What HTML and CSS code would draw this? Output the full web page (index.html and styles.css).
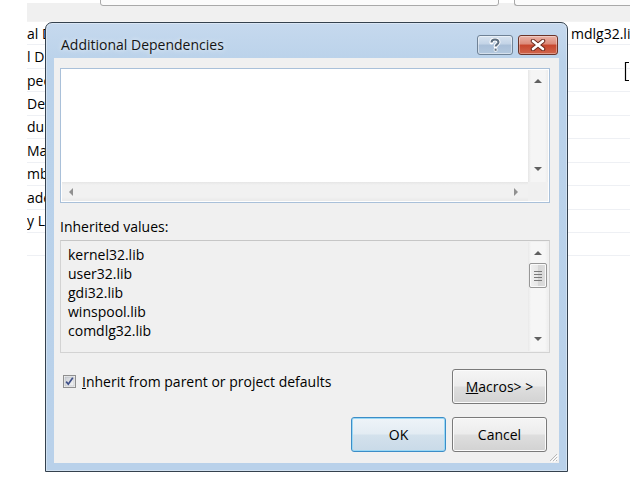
FILE: index.html
```html
<!DOCTYPE html>
<html>
<head>
<meta charset="utf-8">
<link rel="stylesheet" href="styles.css">
</head>
<body>
<div class="app">
  <div class="toolbar">
    <div class="tb-box tb-box-1"></div>
    <div class="tb-box tb-box-2"></div>
  </div>
  <div class="grid">
    <div class="row"><span class="cell-l">al D</span><span class="cell-r">mdlg32.lib;%(AdditionalDependencies)</span></div>
    <div class="row"><span class="cell-l">l D</span><span class="cell-r"></span></div>
    <div class="row"><span class="cell-l">pec</span><span class="cell-r"></span></div>
    <div class="row"><span class="cell-l">Def</span><span class="cell-r"></span></div>
    <div class="row"><span class="cell-l">dule</span><span class="cell-r"></span></div>
    <div class="row"><span class="cell-l">Mar</span><span class="cell-r"></span></div>
    <div class="row"><span class="cell-l">mb</span><span class="cell-r"></span></div>
    <div class="row"><span class="cell-l">ade</span><span class="cell-r"></span></div>
    <div class="row"><span class="cell-l">y Li</span><span class="cell-r"></span></div>
    <div class="row"><span class="cell-l"></span><span class="cell-r"></span></div>
  </div>
</div>

<svg class="ibeam" width="9" height="21" viewBox="0 0 9 21">
  <path d="M7 1.5H3.5V19.5H7" fill="none" stroke="#fff" stroke-width="3"/>
  <path d="M7 1.5H3.5V19.5H7" fill="none" stroke="#000" stroke-width="1.2"/>
</svg>

<div class="dialog">
  <div class="titlebar">
    <div class="title">Additional Dependencies</div>
    <div class="tbtns">
      <div class="tbtn help">
        <svg width="14" height="14" viewBox="0 0 14 14">
          <path d="M3.5 4.5C3.5 2.5 5 1.5 7 1.5S10.5 2.6 10.5 4.3C10.5 6.2 7.6 6.6 7.6 8.6" fill="none" stroke="#fff" stroke-width="4" stroke-linecap="round"/>
          <circle cx="7.6" cy="11.8" r="2" fill="#fff"/>
          <path d="M3.5 4.5C3.5 2.5 5 1.5 7 1.5S10.5 2.6 10.5 4.3C10.5 6.2 7.6 6.6 7.6 8.6" fill="none" stroke="#5e6f80" stroke-width="2"/>
          <rect x="6.6" y="10.6" width="2" height="2.2" fill="#5e6f80"/>
        </svg>
      </div>
      <div class="tbtn close">
        <svg width="16" height="12" viewBox="0 0 16 12">
          <path d="M3 2L13 10M13 2L3 10" stroke="#6b2a1e" stroke-width="4.5" stroke-linecap="round"/>
          <path d="M3 2L13 10M13 2L3 10" stroke="#fff" stroke-width="2.6" stroke-linecap="round"/>
        </svg>
      </div>
    </div>
  </div>
  <div class="client">
    <div class="editbox">
      <div class="edit-area"></div>
      <div class="vscroll">
        <span class="arr up"></span>
        <span class="arr down"></span>
      </div>
      <div class="hscroll">
        <span class="arr left"></span>
        <span class="arr right"></span>
      </div>
      <div class="corner"></div>
    </div>

    <div class="label">Inherited values:</div>

    <div class="listbox">
      <div class="items">
        <div>kernel32.lib</div>
        <div>user32.lib</div>
        <div>gdi32.lib</div>
        <div>winspool.lib</div>
        <div>comdlg32.lib</div>
      </div>
      <div class="vscroll list-scroll">
        <span class="arr up"></span>
        <span class="thumb"><i></i><i></i><i></i><i></i></span>
        <span class="spacer"></span>
        <span class="arr down"></span>
      </div>
    </div>

    <div class="opts">
      <label class="check">
        <svg class="cbox" width="13" height="13" viewBox="0 0 13 13">
          <defs>
            <linearGradient id="cbg" x1="0" y1="0" x2="1" y2="1">
              <stop offset="0" stop-color="#cbcfd5"/>
              <stop offset="1" stop-color="#f6f6f6"/>
            </linearGradient>
          </defs>
          <rect x="0.5" y="0.5" width="12" height="12" fill="#f4f4f4" stroke="#8f8f8f"/>
          <rect x="2" y="2" width="9" height="9" fill="url(#cbg)" stroke="#b4b9c0" stroke-width="0.6"/>
          <path d="M3.2 6.6L5.3 9.2L9.8 2.8" fill="none" stroke="#3e4f88" stroke-width="1.7"/>
        </svg>
        <span><u>I</u>nherit from parent or project defaults</span>
      </label>
      <button class="btn macros"><u>M</u>acros&gt; &gt;</button>
    </div>

    <div class="actions">
      <button class="btn ok">OK</button>
      <button class="btn">Cancel</button>
    </div>

    <svg class="grip" width="10" height="10" viewBox="0 0 10 10">
      <path d="M9 2L2 9M9 5L5 9M9 8L8 9" stroke="#b8b8b8" stroke-width="1"/>
      <path d="M10 3L3 10M10 6L6 10" stroke="#fff" stroke-width="1"/>
    </svg>
  </div>
</div>
</body>
</html>
```

FILE: styles.css
```css
html, body {
  margin: 0;
  padding: 0;
}
body {
  width: 643px;
  height: 483px;
  overflow: hidden;
  position: relative;
  background: #ffffff;
  font-family: "Open Sans", "Noto Sans", "Liberation Sans", sans-serif;
  font-size: 14px;
  color: #000;
}

/* background application */
.app {
  margin-left: 27px;
  width: 603px;
  height: 483px;
  background: #fff;
  display: flex;
  flex-direction: column;
}
.toolbar {
  margin-top: 3px;
  height: 18px;
  background: #f0f0f0;
  display: flex;
  align-items: flex-start;
  padding-left: 73px;
  gap: 15px;
  border-bottom: 1px solid #f3f3f3;
}
.tb-box {
  margin-top: -14px;
  height: 17px;
  box-sizing: border-box;
  border: 1px solid #a9a9a9;
  border-radius: 3px;
  background: #fbfbfb;
}
.tb-box-1 { width: 399px; }
.tb-box-2 { flex: 1; border-right: none; border-radius: 3px 0 0 3px; }

.grid {
  display: flex;
  flex-direction: column;
}
.row {
  height: 23.45px;
  box-sizing: border-box;
  border-bottom: 1px solid #eef0f4;
  display: grid;
  grid-template-columns: 20px 1fr 59px;
  align-items: center;
  white-space: nowrap;
}
.cell-l {
  overflow: hidden;
}
.cell-r {
  grid-column: 3;
  overflow: hidden;
}

.ibeam {
  position: absolute;
  left: 622px;
  top: 61px;
}

/* dialog */
.dialog {
  position: absolute;
  left: 45px;
  top: 22px;
  width: 523px;
  height: 450px;
  box-sizing: border-box;
  border: 1px solid #34414e;
  border-radius: 7px 7px 0 0;
  background: linear-gradient(#c6d9ee, #bad2ea 40px, #b9d1ea);
  box-shadow: inset 0 0 0 1px rgba(255, 255, 255, 0.35);
  display: flex;
  flex-direction: column;
}
.titlebar {
  height: 35px;
  display: flex;
  align-items: flex-start;
  padding: 0 9px 0 15px;
}
.title {
  flex: 1;
  margin-top: 13px;
  line-height: 18px;
  color: #141414;
  text-shadow: 0 0 5px rgba(255, 255, 255, 0.9);
}
.tbtns {
  display: flex;
  gap: 5px;
  margin-top: 12px;
}
.tbtn {
  height: 20px;
  box-sizing: border-box;
  border-radius: 3px;
  display: flex;
  align-items: center;
  justify-content: center;
}
.help {
  width: 36px;
  border: 1px solid #6f8296;
  background: linear-gradient(#d8e4f1 0%, #c2d3e6 45%, #a9bfd8 50%, #b3c8de 100%);
  box-shadow: inset 0 0 0 1px rgba(255, 255, 255, 0.45);
}
.close {
  width: 40px;
  border: 1px solid #6b3328;
  background: linear-gradient(#eab2a6 0%, #dc8a79 45%, #c7462d 50%, #d0654c 100%);
  box-shadow: inset 0 0 0 1px rgba(255, 255, 255, 0.35);
}

.client {
  flex: 1;
  margin: 0 8px 8px;
  background: #f0f0f0;
  padding: 10px 9px 0 6px;
  display: flex;
  flex-direction: column;
  position: relative;
}

.editbox {
  height: 135px;
  box-sizing: border-box;
  border: 1px solid #a9c0d9;
  padding: 1px;
  background: #fff;
  display: grid;
  grid-template-columns: 1fr 20px;
  grid-template-rows: 1fr 19px;
}
.edit-area { background: #fff; }
.vscroll {
  background: linear-gradient(90deg, #e6e6e6, #f5f5f5 3px, #f5f5f5 17px, #ececec);
  display: flex;
  flex-direction: column;
  justify-content: space-between;
  align-items: center;
  padding: 9px 0 11px;
}
.hscroll {
  background: linear-gradient(#e6e6e6, #f1f1f1 3px, #f1f1f1 15px, #e9e9e9);
  display: flex;
  justify-content: space-between;
  align-items: center;
  padding: 0 10px 0 7px;
}
.corner { background: #f0f0f0; }

.arr {
  width: 0;
  height: 0;
  border: 4px solid transparent;
}
.arr.up { border-bottom: 4px solid #606060; border-top-width: 0; }
.arr.down { border-top: 4px solid #606060; border-bottom-width: 0; }
.arr.left { border-right: 4px solid #909090; border-left-width: 0; }
.arr.right { border-left: 4px solid #909090; border-right-width: 0; }

.label {
  margin-top: 14px;
  line-height: 19px;
  color: #000;
}

.listbox {
  margin-top: 4px;
  height: 113px;
  box-sizing: border-box;
  border: 1px solid #d3d3d3;
  border-top-color: #c6c6c6;
  padding: 1px;
  background: #f0f0f0;
  display: grid;
  grid-template-columns: 1fr 20px;
}
.items {
  padding: 3px 0 0 6px;
  line-height: 19px;
  color: #000;
}
.list-scroll {
  justify-content: flex-start;
  padding: 9px 0 10px;
  background: linear-gradient(90deg, #e9e9e9, #f6f6f6 3px, #f6f6f6 17px, #eeeeee);
}
.thumb {
  margin-top: 8px;
  width: 18px;
  height: 25px;
  box-sizing: border-box;
  border: 1px solid #979797;
  border-radius: 2px;
  background: linear-gradient(90deg, #f1f1f1, #e6e6e6 50%, #d6d6d6 51%, #dedede);
  box-shadow: inset 0 0 0 1px #fafafa;
  display: flex;
  flex-direction: column;
  justify-content: center;
  align-items: center;
  gap: 2px;
}
.thumb i {
  display: block;
  width: 8px;
  height: 1px;
  background: #7a7a7a;
}
.spacer { flex: 1; }

.opts {
  margin-top: 16px;
  display: flex;
  justify-content: space-between;
  align-items: flex-start;
  padding-right: 3px;
}
.check {
  margin-top: 3px;
  display: flex;
  align-items: center;
  gap: 6px;
  padding-left: 3px;
  line-height: 19px;
}
.cbox { display: block; }

.btn {
  width: 95px;
  height: 35px;
  box-sizing: border-box;
  border: 1px solid #7a7a7a;
  border-radius: 3px;
  background: linear-gradient(#f5f5f5 0%, #ececec 48%, #dedede 52%, #d2d2d2 100%);
  box-shadow: inset 0 0 0 1px #fbfbfb;
  font-family: inherit;
  font-size: 14px;
  color: #000;
  padding: 0;
  margin: 0;
}
.btn u { text-decoration: underline; }

.actions {
  margin-top: 13px;
  display: flex;
  justify-content: flex-end;
  gap: 6px;
  padding-right: 3px;
}
.btn.ok {
  border-color: #3c8dc7;
  background: linear-gradient(#eef4f8 0%, #e3ecf3 48%, #d3e1ec 52%, #c9dae8 100%);
  box-shadow: inset 0 0 0 1px #9ad8f5;
}

.grip {
  position: absolute;
  right: 1px;
  bottom: 1px;
}
```
